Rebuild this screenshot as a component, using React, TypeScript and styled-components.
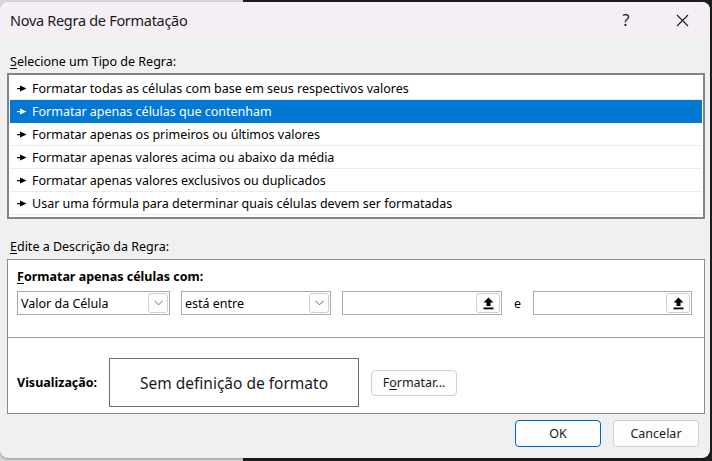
import React from "react";
import styled, { createGlobalStyle } from "styled-components";

const Global = createGlobalStyle`
  html, body { margin: 0; padding: 0; }
  body {
    width: 712px; height: 461px; overflow: hidden;
    background: linear-gradient(to right, #d9d9d9 0, #d9d9d9 243px, #1e1e1e 243px, #1e1e1e 100%);
    font-family: "Noto Sans", "Open Sans", sans-serif;
    font-size: 12.5px;
    color: #000;
  }
`;

const Dialog = styled.div`
  width: 710px;
  height: 456px;
  margin-top: 2px;
  background: #f0f0f0;
  border-radius: 8px;
  overflow: hidden;
  box-shadow: 0 1px 3px rgba(0,0,0,0.35);
  display: flex;
  flex-direction: column;
`;

const TitleBar = styled.div`
  height: 36px;
  background: #f6eef5;
  display: flex;
  align-items: center;
  padding-left: 10px;
`;

const Title = styled.div`
  flex: 1;
  font-size: 14.5px;
  letter-spacing: -0.3px;
  color: #1a1a1a;
`;

const TitleButton = styled.div<{ $w: number }>`
  width: ${(p) => p.$w}px;
  height: 36px;
  display: flex;
  align-items: center;
  justify-content: center;
  font-size: 16px;
  color: #1a1a1a;
`;

const Body = styled.div`
  flex: 1;
  display: flex;
  flex-direction: column;
  padding: 16px 5px 0 7px;
`;

const SectionLabel = styled.div<{ $gap: number }>`
  line-height: 16px;
  padding-left: 3px;
  margin-bottom: ${(p) => p.$gap}px;
  u { text-decoration: underline; text-underline-offset: 2px; }
`;

const List = styled.div`
  border: 2px solid #848484;
  background: #fff;
  padding: 2px 1px 2px 1px;
  display: flex;
  flex-direction: column;
  margin-bottom: 20px;
`;

const Row = styled.div<{ $selected?: boolean }>`
  height: 23px;
  box-sizing: border-box;
  border-bottom: 1px solid ${(p) => (p.$selected ? "#0078d4" : "#ececec")};
  background: ${(p) => (p.$selected ? "#0078d4" : "#fff")};
  color: ${(p) => (p.$selected ? "#fff" : "#000")};
  display: flex;
  align-items: center;
  padding-left: 7px;
  gap: 5px;
`;

const DescBox = styled.div`
  border: 1px solid #8c8c8c;
  background: #fff;
  display: flex;
  flex-direction: column;
`;

const Upper = styled.div`
  padding: 9px 9px 22px 9px;
  border-bottom: 1px solid #a0a0a0;
  display: flex;
  flex-direction: column;
  gap: 6px;
`;

const BoldLabel = styled.div`
  font-weight: 700;
  line-height: 16px;
  u { text-decoration: underline; text-underline-offset: 2px; }
`;

const Controls = styled.div`
  display: flex;
  align-items: center;
`;

const Field = styled.div<{ $w: number; $ml: number }>`
  width: ${(p) => p.$w}px;
  margin-left: ${(p) => p.$ml}px;
  height: 24px;
  box-sizing: border-box;
  border: 1px solid #ababab;
  background: #fff;
  display: flex;
  align-items: center;
  justify-content: space-between;
  padding: 0 1px 0 3px;
`;

const FieldButton = styled.div<{ $w: number }>`
  width: ${(p) => p.$w}px;
  height: 20px;
  box-sizing: border-box;
  border: 1px solid #cfcfcf;
  border-radius: 3px;
  background: #fdfdfd;
  display: flex;
  align-items: center;
  justify-content: center;
`;

const Conj = styled.div`
  width: 31px;
  text-align: center;
  color: #000;
`;

const Lower = styled.div`
  padding: 20px 0 6px 9px;
  display: flex;
  align-items: center;
`;

const PreviewLabel = styled.div`
  font-weight: 700;
  width: 92px;
`;

const Preview = styled.div`
  width: 250px;
  height: 49px;
  box-sizing: border-box;
  border: 1px solid #6e6e6e;
  display: flex;
  align-items: center;
  justify-content: center;
  font-size: 15.5px;
  color: #1a1a1a;
`;

const Button = styled.div<{ $primary?: boolean; $w: number; $h: number; $ml?: number }>`
  width: ${(p) => p.$w}px;
  height: ${(p) => p.$h}px;
  margin-left: ${(p) => p.$ml ?? 0}px;
  box-sizing: border-box;
  border: 1px solid ${(p) => (p.$primary ? "#0067c0" : "#d0d0d0")};
  border-radius: 4px;
  background: #fdfdfd;
  display: flex;
  align-items: center;
  justify-content: center;
  color: #1a1a1a;
  font-size: 12.5px;
  u { text-decoration: underline; text-underline-offset: 2px; }
`;

const Footer = styled.div`
  display: flex;
  justify-content: flex-end;
  gap: 12px;
  padding: 6px 6px 0 0;
`;

const Pointer = ({ color }: { color: string }) => (
  <svg width="10" height="7" viewBox="0 0 10 7">
    <rect x="0" y="3" width="4" height="1.2" fill={color} />
    <polygon points="3,0.5 9.5,3.5 3,6.5" fill={color} />
  </svg>
);

const Chevron = () => (
  <svg width="9" height="6" viewBox="0 0 9 6">
    <polyline points="0.5,0.8 4.5,4.8 8.5,0.8" fill="none" stroke="#6a6a6a" strokeWidth="1" />
  </svg>
);

const Upload = () => (
  <svg width="11" height="13" viewBox="0 0 11 13">
    <polygon points="5.5,0.5 10.5,5.5 7.5,5.5 7.5,9 3.5,9 3.5,5.5 0.5,5.5" fill="#000" />
    <rect x="0.5" y="10.5" width="10" height="1.8" fill="#000" />
  </svg>
);

const CloseIcon = () => (
  <svg width="13" height="13" viewBox="0 0 13 13">
    <path d="M1 1 L12 12 M12 1 L1 12" stroke="#1a1a1a" strokeWidth="1.1" fill="none" />
  </svg>
);

const rules = [
  "Formatar todas as células com base em seus respectivos valores",
  "Formatar apenas células que contenham",
  "Formatar apenas os primeiros ou últimos valores",
  "Formatar apenas valores acima ou abaixo da média",
  "Formatar apenas valores exclusivos ou duplicados",
  "Usar uma fórmula para determinar quais células devem ser formatadas",
];

export default function App() {
  return (
    <>
      <Global />
      <Dialog>
        <TitleBar>
          <Title>Nova Regra de Formatação</Title>
          <TitleButton $w={56}>?</TitleButton>
          <TitleButton $w={56}>
            <CloseIcon />
          </TitleButton>
        </TitleBar>
        <Body>
          <SectionLabel $gap={3}>
            <u>S</u>elecione um Tipo de Regra:
          </SectionLabel>
          <List>
            {rules.map((r, i) => (
              <Row key={r} $selected={i === 1}>
                <Pointer color={i === 1 ? "#fff" : "#000"} />
                {r}
              </Row>
            ))}
          </List>
          <SectionLabel $gap={4}>
            <u>E</u>dite a Descrição da Regra:
          </SectionLabel>
          <DescBox>
            <Upper>
              <BoldLabel>
                <u>F</u>ormatar apenas células com:
              </BoldLabel>
              <Controls>
                <Field $w={153} $ml={0}>
                  Valor da Célula
                  <FieldButton $w={20}>
                    <Chevron />
                  </FieldButton>
                </Field>
                <Field $w={150} $ml={11}>
                  está entre
                  <FieldButton $w={20}>
                    <Chevron />
                  </FieldButton>
                </Field>
                <Field $w={160} $ml={11}>
                  <span />
                  <FieldButton $w={24}>
                    <Upload />
                  </FieldButton>
                </Field>
                <Conj>e</Conj>
                <Field $w={159} $ml={0}>
                  <span />
                  <FieldButton $w={24}>
                    <Upload />
                  </FieldButton>
                </Field>
              </Controls>
            </Upper>
            <Lower>
              <PreviewLabel>Visualização:</PreviewLabel>
              <Preview>Sem definição de formato</Preview>
              <Button $w={86} $h={26} $ml={12}>
                F<u>o</u>rmatar...
              </Button>
            </Lower>
          </DescBox>
          <Footer>
            <Button $primary $w={86} $h={27}>OK</Button>
            <Button $w={86} $h={27}>Cancelar</Button>
          </Footer>
        </Body>
      </Dialog>
    </>
  );
}
